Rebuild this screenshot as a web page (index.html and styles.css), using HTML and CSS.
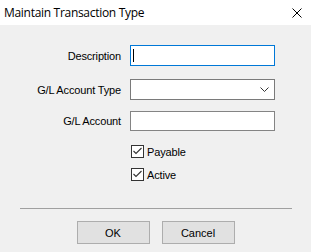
FILE: index.html
```html
<!DOCTYPE html>
<html lang="en">
<head>
    <meta charset="UTF-8">
    <meta name="viewport" content="width=device-width, initial-scale=1.0">
    <title>Maintain Transaction Type</title>
    <link rel="stylesheet" href="styles.css">
</head>
<body>
    <div class="window">
        <div class="titlebar">
            <span class="title">Maintain Transaction Type</span>
            <svg class="close" width="10" height="10" viewBox="0 0 10 10">
                <path d="M0.5 0.5 L9.5 9.5 M9.5 0.5 L0.5 9.5" stroke="#000" stroke-width="1" fill="none"/>
            </svg>
        </div>

        <form class="form">
            <div class="row row-desc">
                <label for="description">Description</label>
                <div class="textbox focused"><span class="caret"></span></div>
            </div>
            <div class="row row-type">
                <label for="accountType">G/L Account Type</label>
                <div class="combo">
                    <svg class="chevron" width="9" height="5" viewBox="0 0 9 5">
                        <path d="M0.5 0.5 L4.5 4.5 L8.5 0.5" stroke="#333" stroke-width="1" fill="none"/>
                    </svg>
                </div>
            </div>
            <div class="row row-account">
                <label for="account">G/L Account</label>
                <div class="textbox plain"></div>
            </div>
            <div class="check-row row-payable">
                <span class="checkbox">
                    <svg width="11" height="11" viewBox="0 0 11 11">
                        <path d="M1.5 5 L4 7.5 L9.5 2" stroke="#333" stroke-width="1.1" fill="none"/>
                    </svg>
                </span>
                <span class="check-label">Payable</span>
            </div>
            <div class="check-row row-active">
                <span class="checkbox">
                    <svg width="11" height="11" viewBox="0 0 11 11">
                        <path d="M1.5 5 L4 7.5 L9.5 2" stroke="#333" stroke-width="1.1" fill="none"/>
                    </svg>
                </span>
                <span class="check-label">Active</span>
            </div>
        </form>

        <div class="separator"></div>

        <div class="buttons">
            <button type="button" class="btn">OK</button>
            <button type="button" class="btn">Cancel</button>
        </div>
    </div>
</body>
</html>
```

FILE: styles.css
```css
* {
    box-sizing: border-box;
    margin: 0;
    padding: 0;
}
body {
    width: 311px;
    height: 252px;
    background-color: #f0f0f0;
    font-family: "Liberation Sans", Arial, sans-serif;
    font-size: 11px;
    letter-spacing: -0.15px;
    color: #000;
    overflow: hidden;
}
.titlebar {
    height: 25px;
    background-color: #fff;
    display: flex;
    align-items: center;
    justify-content: space-between;
    padding-left: 4px;
    padding-right: 9px;
}
.title {
    font-family: "Open Sans", sans-serif;
    font-size: 12px;
    letter-spacing: -0.3px;
    color: #000;
}
.form {
    display: flex;
    flex-direction: column;
    padding-top: 20px;
}
.row {
    display: grid;
    grid-template-columns: 121px 145px;
    column-gap: 9px;
    align-items: center;
}
.row label {
    text-align: right;
}
.row-type {
    margin-top: 13px;
}
.row-account {
    margin-top: 11px;
}
.textbox,
.combo {
    height: 21px;
    background-color: #fff;
    border: 1px solid #7a7a7a;
}
.textbox.focused {
    border-color: #0078d7;
    padding: 3px 0 0 2px;
}
.textbox.plain {
    height: 20px;
    border-color: #848484;
}
.caret {
    display: block;
    width: 1px;
    height: 13px;
    background-color: #000;
}
.combo {
    display: flex;
    align-items: center;
    justify-content: flex-end;
    padding-right: 5px;
}
.check-row {
    display: flex;
    align-items: center;
    padding-left: 131px;
    height: 13px;
}
.row-payable {
    margin-top: 14px;
}
.row-active {
    margin-top: 10px;
}
.checkbox {
    width: 13px;
    height: 13px;
    border: 1px solid #333;
    background-color: #fff;
    display: flex;
    align-items: center;
    justify-content: center;
}
.check-label {
    margin-left: 3px;
}
.separator {
    margin: 27px 19px 0 20px;
    height: 1px;
    background-color: #a0a0a0;
}
.buttons {
    display: flex;
    justify-content: center;
    gap: 12px;
    margin-top: 12px;
}
.btn {
    width: 73px;
    height: 23px;
    background-color: #e1e1e1;
    border: 1px solid #adadad;
    font-family: "Liberation Sans", Arial, sans-serif;
    font-size: 11px;
    color: #000;
}
```
